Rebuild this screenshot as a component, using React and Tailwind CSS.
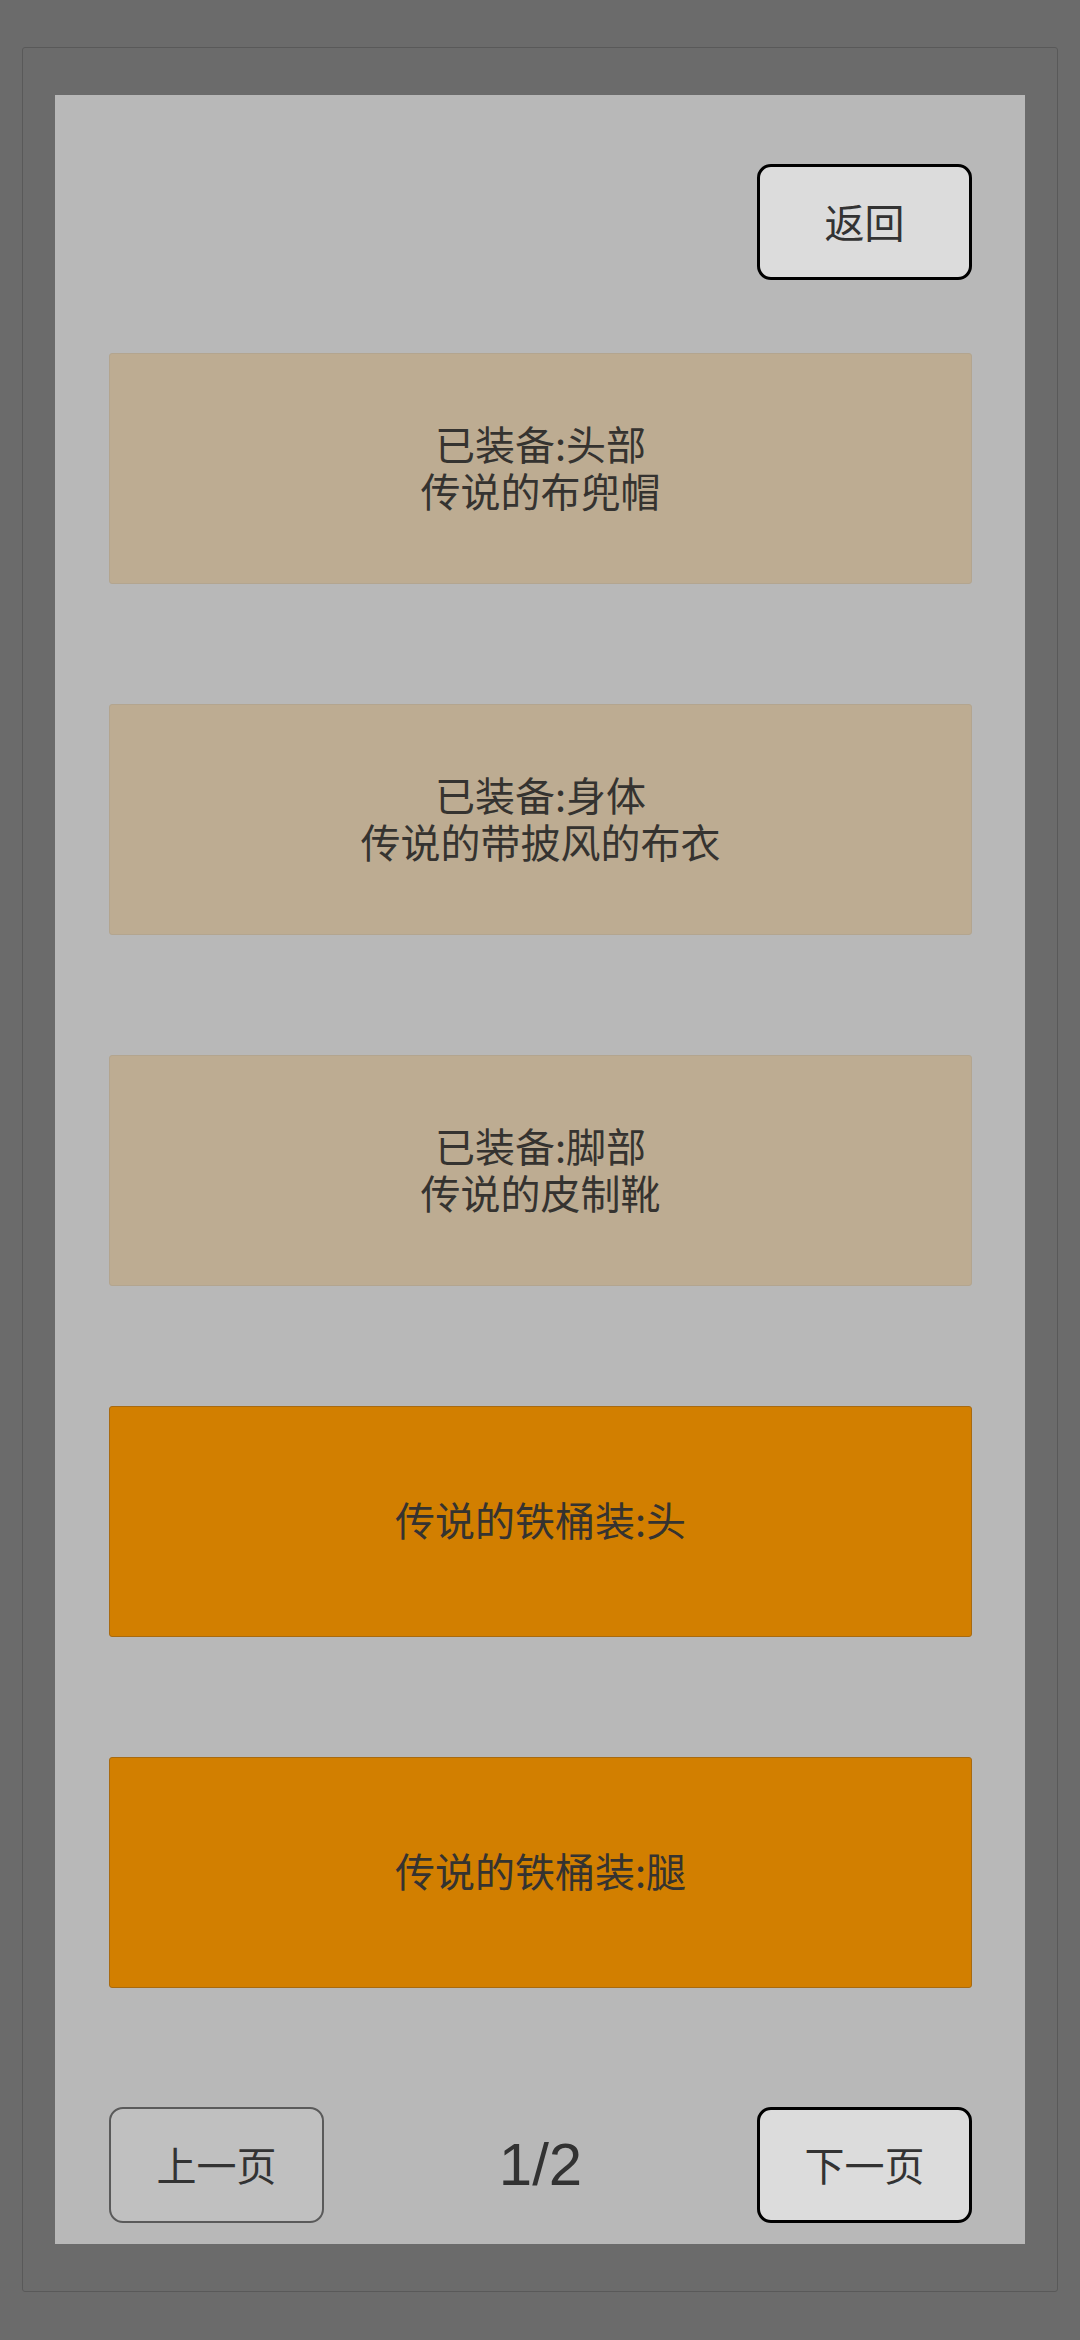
import React from "react";

const cjk = { fontFamily: '"Noto Sans CJK SC", "Noto Sans", sans-serif' };

function Card({ lines, orange }) {
  return (
    <div
      className={
        "h-[231px] w-full flex flex-col items-center justify-center rounded-[3px] border " +
        (orange ? "bg-[#d27f00] border-[#a86a10]" : "bg-[#bdac92] border-[#b3a58f]")
      }
    >
      <div className="flex flex-col items-center -mt-[4px]">
        {lines.map((l, i) => (
          <div key={i} className="text-[40px] leading-[47px] text-[#353330]" style={cjk}>
            {l}
          </div>
        ))}
      </div>
    </div>
  );
}

function Btn({ children, dim }) {
  return (
    <div
      className={
        "w-[215px] h-[116px] flex items-center justify-center rounded-[14px] " +
        (dim
          ? "bg-[#c0c0c0] border-2 border-[#5a5a5a]"
          : "bg-[#dcdcdc] border-[3px] border-black")
      }
    >
      <span className="text-[40px] leading-none text-[#333] -mt-[2px]" style={cjk}>
        {children}
      </span>
    </div>
  );
}

export default function App() {
  return (
    <div className="w-[1080px] h-[2340px] bg-[#6b6b6b] pt-[47px] px-[22px]">
      <div className="h-[2245px] border border-[#595959] rounded-[3px] px-[32px] pt-[47px]">
        <div className="h-[2149px] bg-[#b8b8b8] pl-[54px] pr-[53px] pt-[69px] flex flex-col">
          <div className="flex justify-end">
            <Btn>返回</Btn>
          </div>
          <div className="mt-[73px] flex flex-col gap-[120px]">
            <Card lines={["已装备:头部", "传说的布兜帽"]} />
            <Card lines={["已装备:身体", "传说的带披风的布衣"]} />
            <Card lines={["已装备:脚部", "传说的皮制靴"]} />
            <Card lines={["传说的铁桶装:头"]} orange />
            <Card lines={["传说的铁桶装:腿"]} orange />
          </div>
          <div className="mt-[119px] flex items-center justify-between">
            <Btn dim>上一页</Btn>
            <span
              className="text-[60px] leading-none text-[#323232]"
              style={{ fontFamily: '"Liberation Sans", Arial, sans-serif' }}
            >
              1/2
            </span>
            <Btn>下一页</Btn>
          </div>
        </div>
      </div>
    </div>
  );
}
